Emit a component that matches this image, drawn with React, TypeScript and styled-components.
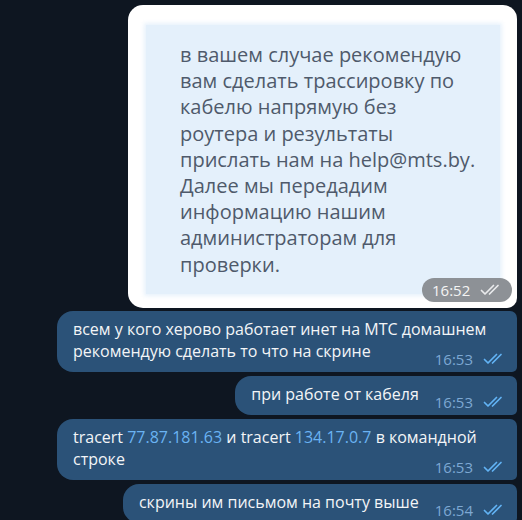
import React from "react";
import styled, { createGlobalStyle } from "styled-components";

const GlobalStyle = createGlobalStyle`
  html, body {
    margin: 0;
    padding: 0;
    background: #0e1621;
    overflow: hidden;
    height: 520px;
  }
  body {
    font-family: "Open Sans", "Noto Sans", sans-serif;
  }
`;

const Chat = styled.div`
  display: flex;
  flex-direction: column;
  align-items: flex-end;
  gap: 4px;
  padding: 5px 5px 0 5px;
  box-sizing: border-box;
  & > * {
    flex-shrink: 0;
  }
`;

const PhotoBubble = styled.div`
  position: relative;
  width: 389px;
  height: 303px;
  box-sizing: border-box;
  background: #ffffff;
  border-radius: 15px 14px 10px 15px;
  padding: 20px 17px 14px 18px;
  display: flex;
  margin-bottom: -1px;
`;

const Shot = styled.div`
  flex: 1;
  background: #e4f0fb;
  box-shadow: 0 0 4px 2px rgba(228, 240, 251, 0.85);
  padding: 17px 10px 0 34px;
  font-family: "Open Sans", "Noto Sans", sans-serif;
  font-size: 20px;
  line-height: 26.2px;
  color: #4f5a6b;
  white-space: pre-line;
`;

const PhotoMeta = styled.div`
  position: absolute;
  right: 5px;
  bottom: 6px;
  height: 24px;
  width: 90px;
  box-sizing: border-box;
  border-radius: 12px;
  background: #8d9196;
  display: flex;
  align-items: center;
  padding-left: 10px;
  gap: 10px;
  color: #f4f4f4;
  font-size: 15px;
`;

const Bubble = styled.div`
  display: flow-root;
  max-width: 460px;
  box-sizing: border-box;
  background: #2b5278;
  border-radius: 16px 7px 5px 16px;
  padding: 7px 12px 4px 16px;
  color: #f3f5f7;
  font-size: 16px;
  line-height: 22px;
`;

const Link = styled.span`
  color: #6ab3f3;
`;

const Meta = styled.span`
  float: right;
  display: inline-flex;
  align-items: center;
  gap: 10px;
  height: 18px;
  margin: 10px 0 0 16px;
  color: #7da8d3;
  font-size: 15px;
  line-height: 18px;
`;

const Checks = ({ color }: { color: string }) => (
  <svg width="22" height="12" viewBox="0 0 22 12" fill="none">
    <path
      d="M1.5 6.5 L5 10 L13.5 1.5 M9.5 10 L18 1.5"
      stroke={color}
      strokeWidth="1.7"
      strokeLinecap="round"
      strokeLinejoin="round"
    />
  </svg>
);

const shotText = `в вашем случае рекомендую
вам сделать трассировку по
кабелю напрямую без
роутера и результаты
прислать нам на help@mts.by.
Далее мы передадим
информацию нашим
администраторам для
проверки.`;

const MessageMeta = ({ time }: { time: string }) => (
  <Meta>
    {time}
    <Checks color="#62b3f5" />
  </Meta>
);

export default function App() {
  return (
    <>
      <GlobalStyle />
      <Chat>
        <PhotoBubble>
          <Shot>{shotText}</Shot>
          <PhotoMeta>
            16:52
            <Checks color="#e9eaec" />
          </PhotoMeta>
        </PhotoBubble>
        <Bubble>
          всем у кого херово работает инет на МТС домашнем рекомендую сделать то что на скрине
          <MessageMeta time="16:53" />
        </Bubble>
        <Bubble>
          при работе от кабеля
          <MessageMeta time="16:53" />
        </Bubble>
        <Bubble>
          tracert <Link>77.87.181.63</Link> и tracert <Link>134.17.0.7</Link> в командной строке
          <MessageMeta time="16:53" />
        </Bubble>
        <Bubble>
          скрины им письмом на почту выше
          <MessageMeta time="16:54" />
        </Bubble>
      </Chat>
    </>
  );
}
